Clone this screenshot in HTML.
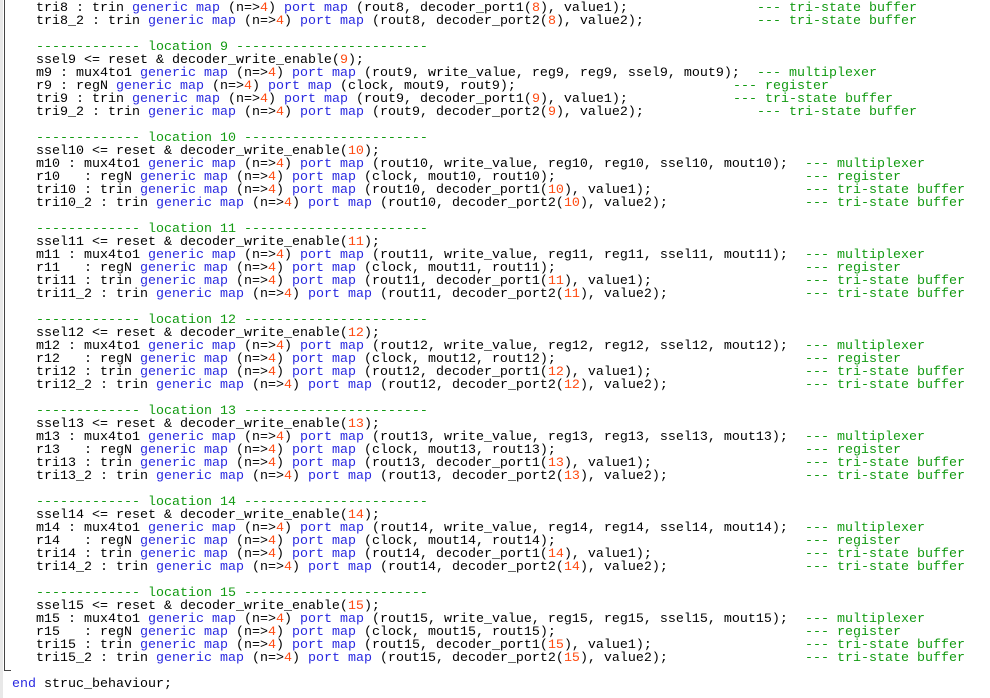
<!DOCTYPE html>
<html><head><meta charset="utf-8"><style>
body{margin:0;width:990px;height:698px;background:#fff;overflow:hidden;position:relative;font-family:"Liberation Mono",monospace;font-size:13.33px;color:#000}
.l{position:absolute;left:36px;height:13px;line-height:13px;white-space:pre;margin-top:3px}
.k{color:#2a2ae0}.n{color:#ff4a10}.c{color:#129a12}
.cm{position:absolute;white-space:pre;color:#129a12;height:13px;line-height:13px;margin-top:3px}
#g{position:absolute;left:0;top:0;width:3px;height:698px;background:#e8e8e8}
#v{position:absolute;left:4px;top:0;width:1px;height:671px;background:#444}
#h{position:absolute;left:4px;top:670px;width:7px;height:1px;background:#444}
</style></head><body>
<div id="g"></div><div id="v"></div><div id="h"></div>

<div class="l" style="top:-1px">tri8 : trin <span class="k">generic map</span> (n=&gt;<span class="n">4</span>) <span class="k">port map</span> (rout8, decoder_port1(<span class="n">8</span>), value1);</div><div class="cm" style="top:-1px;left:757px">--- tri-state buffer</div>
<div class="l" style="top:12px">tri8_2 : trin <span class="k">generic map</span> (n=&gt;<span class="n">4</span>) <span class="k">port map</span> (rout8, decoder_port2(<span class="n">8</span>), value2);</div><div class="cm" style="top:12px;left:757px">--- tri-state buffer</div>

<div class="l c" style="top:38px">------------- location 9 ------------------------</div>
<div class="l" style="top:51px">ssel9 &lt;= reset &amp; decoder_write_enable(<span class="n">9</span>);</div>
<div class="l" style="top:64px">m9 : mux4to1 <span class="k">generic map</span> (n=&gt;<span class="n">4</span>) <span class="k">port map</span> (rout9, write_value, reg9, reg9, ssel9, mout9);</div><div class="cm" style="top:64px;left:757px">--- multiplexer</div>
<div class="l" style="top:77px">r9 : regN <span class="k">generic map</span> (n=&gt;<span class="n">4</span>) <span class="k">port map</span> (clock, mout9, rout9);</div><div class="cm" style="top:77px;left:733px">--- register</div>
<div class="l" style="top:90px">tri9 : trin <span class="k">generic map</span> (n=&gt;<span class="n">4</span>) <span class="k">port map</span> (rout9, decoder_port1(<span class="n">9</span>), value1);</div><div class="cm" style="top:90px;left:733px">--- tri-state buffer</div>
<div class="l" style="top:103px">tri9_2 : trin <span class="k">generic map</span> (n=&gt;<span class="n">4</span>) <span class="k">port map</span> (rout9, decoder_port2(<span class="n">9</span>), value2);</div><div class="cm" style="top:103px;left:757px">--- tri-state buffer</div>

<div class="l c" style="top:129px">------------- location 10 -----------------------</div>
<div class="l" style="top:142px">ssel10 &lt;= reset &amp; decoder_write_enable(<span class="n">10</span>);</div>
<div class="l" style="top:155px">m10 : mux4to1 <span class="k">generic map</span> (n=&gt;<span class="n">4</span>) <span class="k">port map</span> (rout10, write_value, reg10, reg10, ssel10, mout10);</div><div class="cm" style="top:155px;left:805px">--- multiplexer</div>
<div class="l" style="top:168px">r10   : regN <span class="k">generic map</span> (n=&gt;<span class="n">4</span>) <span class="k">port map</span> (clock, mout10, rout10);</div><div class="cm" style="top:168px;left:805px">--- register</div>
<div class="l" style="top:181px">tri10 : trin <span class="k">generic map</span> (n=&gt;<span class="n">4</span>) <span class="k">port map</span> (rout10, decoder_port1(<span class="n">10</span>), value1);</div><div class="cm" style="top:181px;left:805px">--- tri-state buffer</div>
<div class="l" style="top:194px">tri10_2 : trin <span class="k">generic map</span> (n=&gt;<span class="n">4</span>) <span class="k">port map</span> (rout10, decoder_port2(<span class="n">10</span>), value2);</div><div class="cm" style="top:194px;left:805px">--- tri-state buffer</div>

<div class="l c" style="top:220px">------------- location 11 -----------------------</div>
<div class="l" style="top:233px">ssel11 &lt;= reset &amp; decoder_write_enable(<span class="n">11</span>);</div>
<div class="l" style="top:246px">m11 : mux4to1 <span class="k">generic map</span> (n=&gt;<span class="n">4</span>) <span class="k">port map</span> (rout11, write_value, reg11, reg11, ssel11, mout11);</div><div class="cm" style="top:246px;left:805px">--- multiplexer</div>
<div class="l" style="top:259px">r11   : regN <span class="k">generic map</span> (n=&gt;<span class="n">4</span>) <span class="k">port map</span> (clock, mout11, rout11);</div><div class="cm" style="top:259px;left:805px">--- register</div>
<div class="l" style="top:272px">tri11 : trin <span class="k">generic map</span> (n=&gt;<span class="n">4</span>) <span class="k">port map</span> (rout11, decoder_port1(<span class="n">11</span>), value1);</div><div class="cm" style="top:272px;left:805px">--- tri-state buffer</div>
<div class="l" style="top:285px">tri11_2 : trin <span class="k">generic map</span> (n=&gt;<span class="n">4</span>) <span class="k">port map</span> (rout11, decoder_port2(<span class="n">11</span>), value2);</div><div class="cm" style="top:285px;left:805px">--- tri-state buffer</div>

<div class="l c" style="top:311px">------------- location 12 -----------------------</div>
<div class="l" style="top:324px">ssel12 &lt;= reset &amp; decoder_write_enable(<span class="n">12</span>);</div>
<div class="l" style="top:337px">m12 : mux4to1 <span class="k">generic map</span> (n=&gt;<span class="n">4</span>) <span class="k">port map</span> (rout12, write_value, reg12, reg12, ssel12, mout12);</div><div class="cm" style="top:337px;left:805px">--- multiplexer</div>
<div class="l" style="top:350px">r12   : regN <span class="k">generic map</span> (n=&gt;<span class="n">4</span>) <span class="k">port map</span> (clock, mout12, rout12);</div><div class="cm" style="top:350px;left:805px">--- register</div>
<div class="l" style="top:363px">tri12 : trin <span class="k">generic map</span> (n=&gt;<span class="n">4</span>) <span class="k">port map</span> (rout12, decoder_port1(<span class="n">12</span>), value1);</div><div class="cm" style="top:363px;left:805px">--- tri-state buffer</div>
<div class="l" style="top:376px">tri12_2 : trin <span class="k">generic map</span> (n=&gt;<span class="n">4</span>) <span class="k">port map</span> (rout12, decoder_port2(<span class="n">12</span>), value2);</div><div class="cm" style="top:376px;left:805px">--- tri-state buffer</div>

<div class="l c" style="top:402px">------------- location 13 -----------------------</div>
<div class="l" style="top:415px">ssel13 &lt;= reset &amp; decoder_write_enable(<span class="n">13</span>);</div>
<div class="l" style="top:428px">m13 : mux4to1 <span class="k">generic map</span> (n=&gt;<span class="n">4</span>) <span class="k">port map</span> (rout13, write_value, reg13, reg13, ssel13, mout13);</div><div class="cm" style="top:428px;left:805px">--- multiplexer</div>
<div class="l" style="top:441px">r13   : regN <span class="k">generic map</span> (n=&gt;<span class="n">4</span>) <span class="k">port map</span> (clock, mout13, rout13);</div><div class="cm" style="top:441px;left:805px">--- register</div>
<div class="l" style="top:454px">tri13 : trin <span class="k">generic map</span> (n=&gt;<span class="n">4</span>) <span class="k">port map</span> (rout13, decoder_port1(<span class="n">13</span>), value1);</div><div class="cm" style="top:454px;left:805px">--- tri-state buffer</div>
<div class="l" style="top:467px">tri13_2 : trin <span class="k">generic map</span> (n=&gt;<span class="n">4</span>) <span class="k">port map</span> (rout13, decoder_port2(<span class="n">13</span>), value2);</div><div class="cm" style="top:467px;left:805px">--- tri-state buffer</div>

<div class="l c" style="top:493px">------------- location 14 -----------------------</div>
<div class="l" style="top:506px">ssel14 &lt;= reset &amp; decoder_write_enable(<span class="n">14</span>);</div>
<div class="l" style="top:519px">m14 : mux4to1 <span class="k">generic map</span> (n=&gt;<span class="n">4</span>) <span class="k">port map</span> (rout14, write_value, reg14, reg14, ssel14, mout14);</div><div class="cm" style="top:519px;left:805px">--- multiplexer</div>
<div class="l" style="top:532px">r14   : regN <span class="k">generic map</span> (n=&gt;<span class="n">4</span>) <span class="k">port map</span> (clock, mout14, rout14);</div><div class="cm" style="top:532px;left:805px">--- register</div>
<div class="l" style="top:545px">tri14 : trin <span class="k">generic map</span> (n=&gt;<span class="n">4</span>) <span class="k">port map</span> (rout14, decoder_port1(<span class="n">14</span>), value1);</div><div class="cm" style="top:545px;left:805px">--- tri-state buffer</div>
<div class="l" style="top:558px">tri14_2 : trin <span class="k">generic map</span> (n=&gt;<span class="n">4</span>) <span class="k">port map</span> (rout14, decoder_port2(<span class="n">14</span>), value2);</div><div class="cm" style="top:558px;left:805px">--- tri-state buffer</div>

<div class="l c" style="top:584px">------------- location 15 -----------------------</div>
<div class="l" style="top:597px">ssel15 &lt;= reset &amp; decoder_write_enable(<span class="n">15</span>);</div>
<div class="l" style="top:610px">m15 : mux4to1 <span class="k">generic map</span> (n=&gt;<span class="n">4</span>) <span class="k">port map</span> (rout15, write_value, reg15, reg15, ssel15, mout15);</div><div class="cm" style="top:610px;left:805px">--- multiplexer</div>
<div class="l" style="top:623px">r15   : regN <span class="k">generic map</span> (n=&gt;<span class="n">4</span>) <span class="k">port map</span> (clock, mout15, rout15);</div><div class="cm" style="top:623px;left:805px">--- register</div>
<div class="l" style="top:636px">tri15 : trin <span class="k">generic map</span> (n=&gt;<span class="n">4</span>) <span class="k">port map</span> (rout15, decoder_port1(<span class="n">15</span>), value1);</div><div class="cm" style="top:636px;left:805px">--- tri-state buffer</div>
<div class="l" style="top:649px">tri15_2 : trin <span class="k">generic map</span> (n=&gt;<span class="n">4</span>) <span class="k">port map</span> (rout15, decoder_port2(<span class="n">15</span>), value2);</div><div class="cm" style="top:649px;left:805px">--- tri-state buffer</div>

<div class="l" style="top:675px;left:12px"><span class="k">end</span> struc_behaviour;</div>
</body></html>
